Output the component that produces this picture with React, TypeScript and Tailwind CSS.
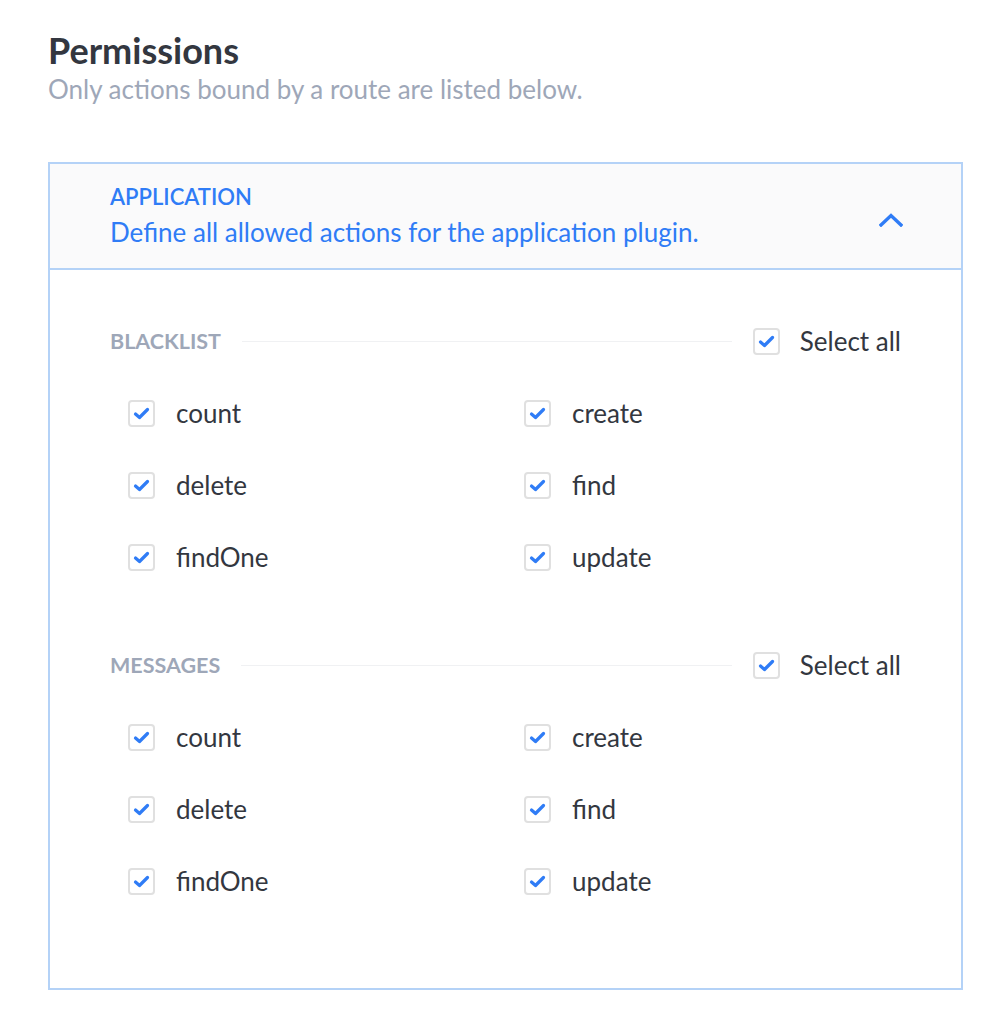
import React from 'react';

const sections = [
  { name: 'Blacklist', actions: ['count', 'create', 'delete', 'find', 'findOne', 'update'] },
  { name: 'Messages', actions: ['count', 'create', 'delete', 'find', 'findOne', 'update'] },
];

// Petite case à cocher, toujours cochée
const CheckBox = () => (
  <span className="flex h-[27px] w-[27px] shrink-0 items-center justify-center rounded-[4px] border-2 border-[#e0e0e0] bg-white">
    <svg width="17" height="13" viewBox="0 0 17 13" fill="none">
      <path d="M2.5 7L6.5 10.5L14.5 2.5" stroke="#2f7cf6" strokeWidth="3.2" strokeLinecap="round" strokeLinejoin="round" />
    </svg>
  </span>
);

const Section = ({ name, actions }: { name: string; actions: string[] }) => (
  <div>
    <div className="flex h-[72px] items-center">
      <span className="text-[21.5px] font-bold uppercase text-[#9ea7b8]">{name}</span>
      <div className="mx-[21px] h-px flex-1 bg-[#f0f1f3]" />
      <label className="flex items-center gap-[20px]">
        <CheckBox />
        <span className="text-[26px] text-[#333740]">Select all</span>
      </label>
    </div>
    <div className="grid grid-cols-[396px_1fr] pl-[18px]">
      {actions.map((a) => (
        <label key={a} className="flex h-[72px] items-center gap-[21px]">
          <CheckBox />
          <span className="text-[26px] text-[#333740]">{a}</span>
        </label>
      ))}
    </div>
  </div>
);

export default function App() {
  return (
    <div className="min-h-screen bg-white px-[48px] pt-[28px] font-['Lato',sans-serif]">
      <h1 className="text-[36px] font-bold leading-[44px] text-[#333740]">Permissions</h1>
      <p className="mt-[1px] text-[26px] leading-[32px] text-[#9ea7b8]">Only actions bound by a route are listed below.</p>

      <div className="mt-[57px] w-[915px] border-2 border-[#b4d2f7]">
        <div className="flex h-[106px] items-center justify-between border-b-2 border-[#b4d2f7] bg-[#fafafb] pl-[60px] pr-[58px]">
          <div className="flex flex-col gap-[6px]">
            <span className="text-[22px] font-semibold leading-[26px] text-[#2f7cf6]">APPLICATION</span>
            <span className="text-[26px] leading-[32px] text-[#2f7cf6]">Define all allowed actions for the application plugin.</span>
          </div>
          <svg className="mt-[8px]" width="24" height="14" viewBox="0 0 24 14" fill="none">
            <path d="M2 12L12 2.5L22 12" stroke="#2f7cf6" strokeWidth="3.4" strokeLinecap="square" />
          </svg>
        </div>
        <div className="flex flex-col gap-[36px] px-[60px] pb-[71px] pt-[35px]">
          {sections.map((s) => (
            <Section key={s.name} name={s.name} actions={s.actions} />
          ))}
        </div>
      </div>
    </div>
  );
}
